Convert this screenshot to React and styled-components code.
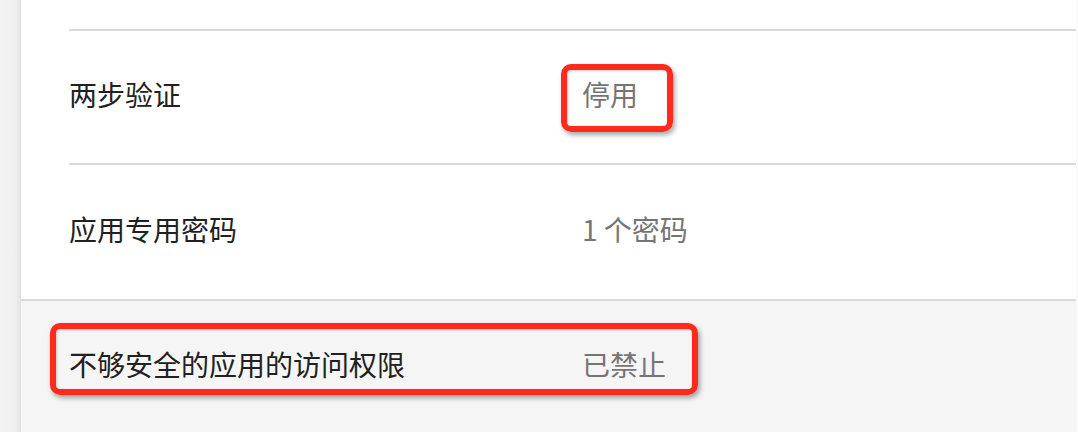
import React from 'react';
import styled, { createGlobalStyle } from 'styled-components';

const GlobalStyle = createGlobalStyle`
  html, body {
    margin: 0;
    padding: 0;
    background: #f2f2f2;
  }
  body {
    font-family: "Noto Sans CJK SC", "Liberation Sans", sans-serif;
  }
`;

const Page = styled.div`
  display: flex;
  width: 1078px;
  height: 432px;
  overflow: hidden;
`;

const Gutter = styled.div`
  flex: 0 0 21px;
  background: linear-gradient(to right, #f3f3f3 0%, #f1f1f1 70%, #e2e2e2 100%);
`;

const Panel = styled.section`
  flex: 1;
  display: flex;
  flex-direction: column;
  background: #fff;
  border-right: 2px solid #fafafa;
`;

const TopSpace = styled.div`
  flex: 0 0 29px;
`;

const Row = styled.div`
  position: relative;
  flex: ${(p) => (p.$grow ? '1 1 auto' : '0 0 auto')};
  min-height: 0;
  padding-left: ${(p) => (p.$flush ? 0 : '48px')};
  background: ${(p) => (p.$muted ? '#f5f5f5' : '#fff')};
`;

const RowInner = styled.div`
  box-sizing: border-box;
  display: grid;
  grid-template-columns: 513px 1fr;
  align-items: center;
  height: ${(p) => p.$height}px;
  padding-bottom: 6px;
  border-top: 2px solid #dadada;
  padding-left: ${(p) => (p.$flush ? '48px' : 0)};
`;

const Label = styled.div`
  font-size: 28px;
  color: #212121;
  line-height: 1;
`;

const Value = styled.div`
  font-size: 28px;
  color: #757575;
  line-height: 1;
`;

const Highlight = styled.div`
  position: absolute;
  left: ${(p) => p.$left}px;
  top: ${(p) => p.$top}px;
  width: ${(p) => p.$width}px;
  height: ${(p) => p.$height}px;
  box-sizing: border-box;
  border: 6px solid #ff2a1c;
  border-radius: 10px;
  box-shadow: 2px 3px 5px rgba(0, 0, 0, 0.35), inset 1px 1px 3px rgba(0, 0, 0, 0.2);
  pointer-events: none;
`;

export default function App() {
  return (
    <>
      <GlobalStyle />
      <Page>
        <Gutter />
        <Panel>
          <TopSpace />
          <Row>
            <RowInner $height={134}>
              <Label>两步验证</Label>
              <Value>停用</Value>
            </RowInner>
            <Highlight $left={540} $top={35} $width={112} $height={68} />
          </Row>
          <Row>
            <RowInner $height={136}>
              <Label>应用专用密码</Label>
              <Value>1 个密码</Value>
            </RowInner>
          </Row>
          <Row $flush $muted $grow>
            <RowInner $flush $height={133}>
              <Label>不够安全的应用的访问权限</Label>
              <Value>已禁止</Value>
            </RowInner>
            <Highlight $left={29} $top={24} $width={648} $height={72} />
          </Row>
        </Panel>
      </Page>
    </>
  );
}
